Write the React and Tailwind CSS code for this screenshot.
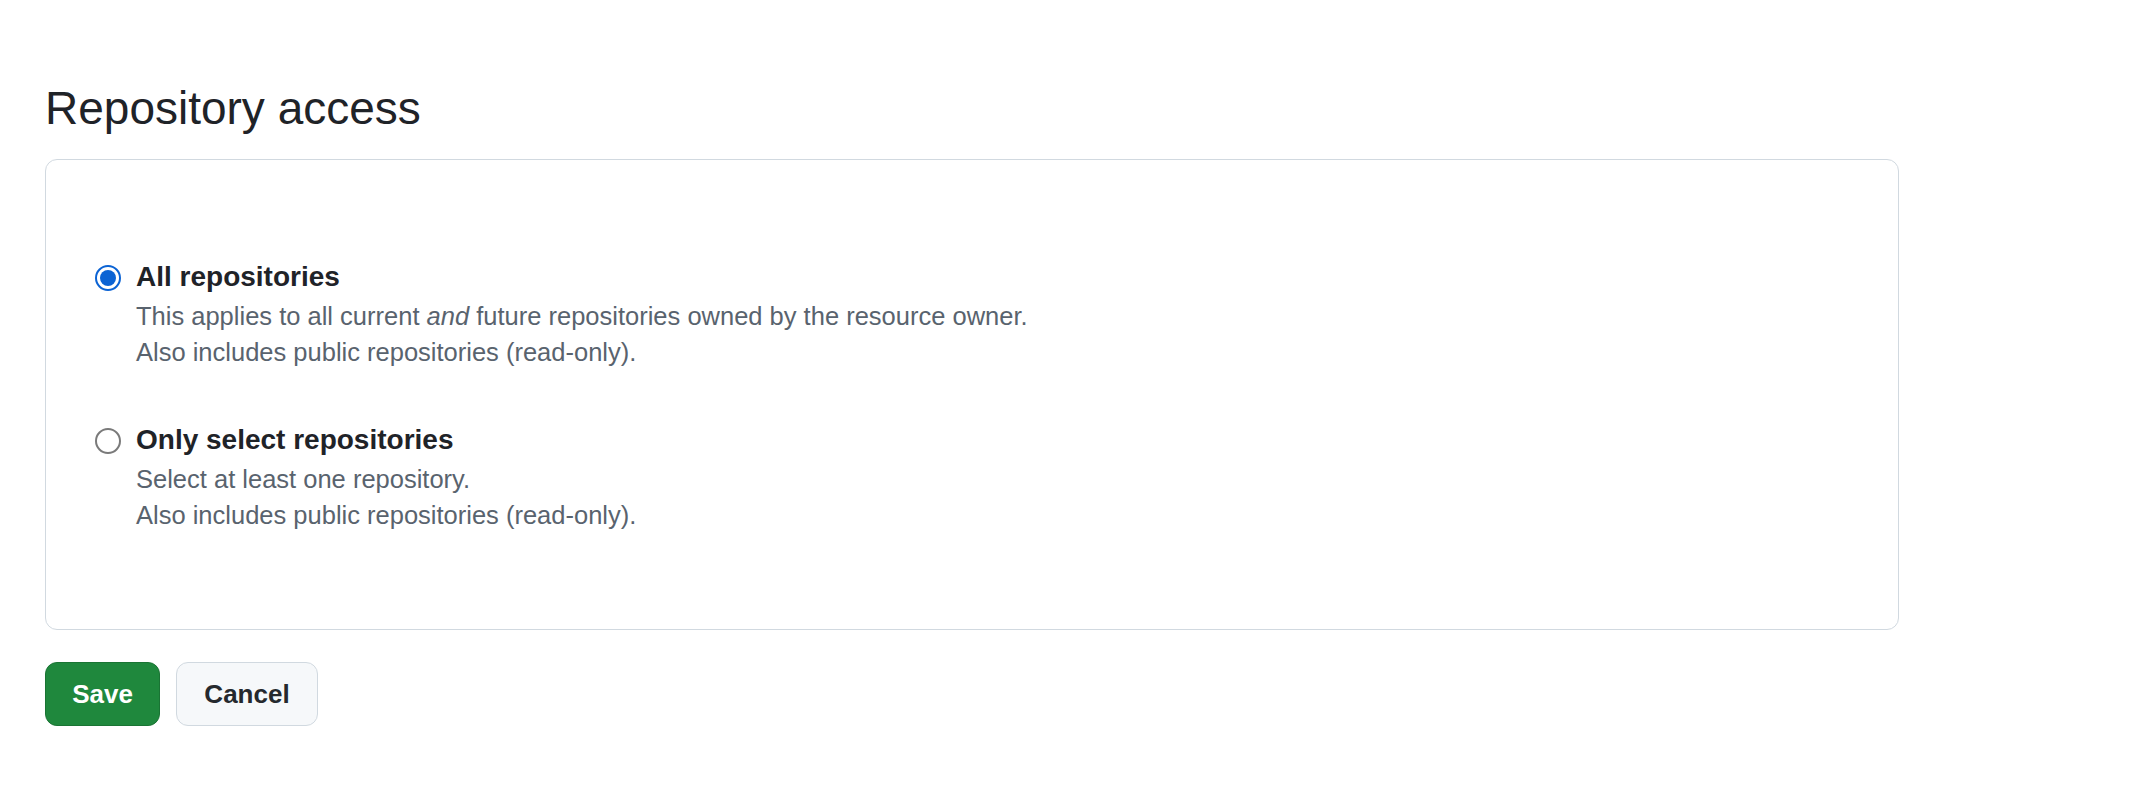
import React from "react";

function Radio({ checked }) {
  if (checked) {
    return (
      <span className="mt-[6px] flex h-[26px] w-[26px] shrink-0 items-center justify-center rounded-full border-[2px] border-[#0b63d4] bg-white">
        <span className="h-[16px] w-[16px] rounded-full bg-[#0b63d4]" />
      </span>
    );
  }
  return (
    <span className="mt-[6px] h-[26px] w-[26px] shrink-0 rounded-full border-[2px] border-[#7a7a7a] bg-white" />
  );
}

function Option({ checked, label, lines }) {
  return (
    <div className="flex items-start gap-[15px]">
      <Radio checked={checked} />
      <div className="flex flex-col">
        <div className="text-[28px] font-bold leading-[36px] text-[#1f2328]">{label}</div>
        <div className="mt-[3px] flex flex-col text-[25.5px] leading-[36px] text-[#59636e]">
          {lines.map((l, i) => (
            <div key={i}>{l}</div>
          ))}
        </div>
      </div>
    </div>
  );
}

export default function App() {
  return (
    <div
      className="min-h-screen bg-white pl-[45px] pt-[80px]"
      style={{ fontFamily: '"Liberation Sans", Arial, sans-serif' }}
    >
      <h2 className="text-[46px] font-normal leading-[56px] text-[#1f2328]">Repository access</h2>
      <div className="mt-[23px] flex w-[1854px] flex-col gap-[52px] rounded-[12px] border border-[#d1d9e0] pb-[96px] pl-[49px] pt-[99px]">
        <Option
          checked
          label="All repositories"
          lines={[
            <span>
              This applies to all current <em>and</em> future repositories owned by the resource owner.
            </span>,
            "Also includes public repositories (read-only).",
          ]}
        />
        <Option
          label="Only select repositories"
          lines={["Select at least one repository.", "Also includes public repositories (read-only)."]}
        />
      </div>
      <div className="mt-[32px] flex gap-[16px]">
        <button className="flex h-[64px] w-[115px] items-center justify-center rounded-[12px] border border-[#1a7434] bg-[#1f883d] text-[26px] font-bold text-white">
          Save
        </button>
        <button className="flex h-[64px] w-[142px] items-center justify-center rounded-[12px] border border-[#d1d9e0] bg-[#f6f8fa] text-[26px] font-bold text-[#25292e]">
          Cancel
        </button>
      </div>
    </div>
  );
}
